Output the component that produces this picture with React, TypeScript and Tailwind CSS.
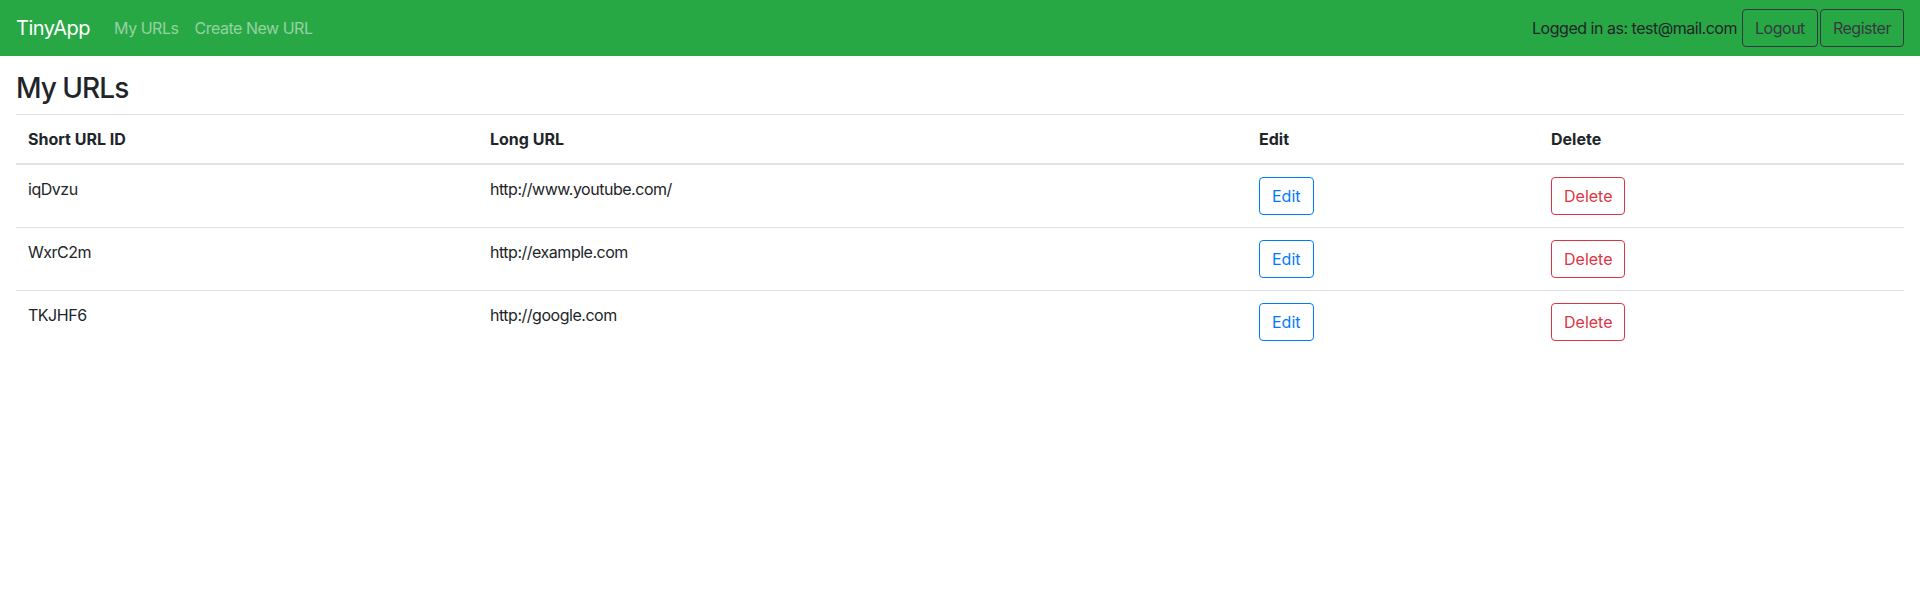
import React from "react";

const rows = [
  { id: "iqDvzu", url: "http://www.youtube.com/" },
  { id: "WxrC2m", url: "http://example.com" },
  { id: "TKJHF6", url: "http://google.com" },
];

export default function App() {
  return (
    <div
      className="min-h-screen bg-white text-[#212529] text-[16px] leading-[1.5]"
      style={{ fontFamily: 'Inter, "Noto Sans", "Liberation Sans", sans-serif' }}
    >
      <nav className="flex h-[56px] items-center justify-between bg-[#28a745] px-4 py-2">
        <div className="flex items-center tracking-[-0.03em]">
          <span className="mr-4 py-[5px] text-[20px] leading-[30px] text-white">TinyApp</span>
          <span className="px-2 py-2 leading-6 text-[rgba(255,255,255,0.5)]">My URLs</span>
          <span className="px-2 py-2 leading-6 text-[rgba(255,255,255,0.5)]">Create New URL</span>
        </div>
        <div className="flex items-center tracking-[-0.03em]">
          <span className="mr-[5px] text-[#212529]">Logged in as: test@mail.com</span>
          <button className="h-[38px] rounded border border-[#343a40] px-3 text-[#343a40]">Logout</button>
          <button className="ml-[2px] h-[38px] rounded border border-[#343a40] px-3 text-[#343a40]">Register</button>
        </div>
      </nav>
      <div className="px-4">
        <h3 className="mt-4 mb-2 text-[28px] font-medium leading-[1.2] tracking-[-0.035em]">My URLs</h3>
        <table className="w-full table-fixed border-collapse">
          <colgroup>
            <col className="w-[462px]" />
            <col className="w-[769px]" />
            <col className="w-[292px]" />
            <col />
          </colgroup>
          <thead>
            <tr>
              <th className="border-t border-b-2 border-[#dee2e6] p-3 text-left font-bold">Short URL ID</th>
              <th className="border-t border-b-2 border-[#dee2e6] p-3 text-left font-bold">Long URL</th>
              <th className="border-t border-b-2 border-[#dee2e6] p-3 text-left font-bold">Edit</th>
              <th className="border-t border-b-2 border-[#dee2e6] p-3 text-left font-bold">Delete</th>
            </tr>
          </thead>
          <tbody>
            {rows.map((r) => (
              <tr key={r.id}>
                <td className="border-t border-[#dee2e6] p-3 align-top tracking-[-0.03em]">{r.id}</td>
                <td className="border-t border-[#dee2e6] p-3 align-top tracking-[-0.03em]">{r.url}</td>
                <td className="border-t border-[#dee2e6] p-3 align-top">
                  <button className="h-[38px] rounded border border-[#007bff] px-3 text-[#007bff]">Edit</button>
                </td>
                <td className="border-t border-[#dee2e6] p-3 align-top">
                  <button className="h-[38px] rounded border border-[#dc3545] px-3 text-[#dc3545]">Delete</button>
                </td>
              </tr>
            ))}
          </tbody>
        </table>
      </div>
    </div>
  );
}
